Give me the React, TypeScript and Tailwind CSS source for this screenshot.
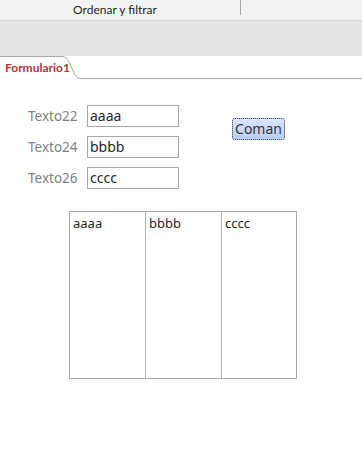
import React from 'react';

const fields = [
  { label: 'Texto22', value: 'aaaa' },
  { label: 'Texto24', value: 'bbbb' },
  { label: 'Texto26', value: 'cccc' },
];

export default function App() {
  return (
    <div className="w-[362px] h-[473px] bg-white overflow-hidden font-['Noto_Sans',sans-serif]">
      {/* ribbon */}
      <div className="flex h-[21px] bg-[#f3f3f3] border-b border-[#d4d4d4]">
        <div className="w-[230px] flex justify-center items-center text-[12px] text-[#262626] pb-[1px] font-['Lato',sans-serif]">Ordenar y filtrar</div>
        <div className="ml-[10px] w-px h-[15px] bg-[#a8a8a8]" />
      </div>
      <div className="h-[35px] bg-[#e6e6e6]" />

      {/* tab strip */}
      <div className="flex h-[23px] bg-white">
        <div className="relative w-[80px] shrink-0">
          <svg className="absolute inset-0" width="80" height="23" viewBox="0 0 80 23">
            <path d="M0 0.5 H62 Q66 0.5 68 4 L75 19 Q77 22.5 80 22.5" fill="none" stroke="#a6a6a6" strokeWidth="1" />
          </svg>
          <div className="relative pl-[5px] pt-[5px] text-[12px] font-bold text-[#b2353a] leading-[14px] font-['Lato',sans-serif]">Formulario1</div>
        </div>
        <div className="flex-1 border-b border-[#a6a6a6] self-end" />
      </div>

      {/* form body */}
      <div className="flex pt-[26px]">
        <div className="flex flex-col gap-[9px] pl-[28px]">
          {fields.map((f) => (
            <div key={f.label} className="flex items-center">
              <div className="w-[59px] text-[13.5px] text-[#7f7f7f]">{f.label}</div>
              <div className="w-[92px] h-[22px] border border-[#a6a6a6] pl-[2px] text-[14px] leading-[20px] text-[#262626]">{f.value}</div>
            </div>
          ))}
        </div>
        <div className="pl-[53px] pt-[13px]">
          <div className="w-[53px] h-[22px] rounded-[3px] border border-dotted border-[#2f3a55] bg-gradient-to-b from-[#dbe6fb] to-[#b8cdf5] text-[14px] leading-[19px] text-[#333] text-center">
            Coman
          </div>
        </div>
      </div>

      {/* datasheet */}
      <div className="pl-[69px] pt-[22px]">
        <div className="flex w-[228px] h-[168px] border border-[#a6a6a6] text-[13px] text-[#262626]">
          <div className="w-[76px] border-r border-[#b4b4b4] pl-[3px] pt-[2px]">aaaa</div>
          <div className="w-[76px] border-r border-[#b4b4b4] pl-[3px] pt-[2px]">bbbb</div>
          <div className="flex-1 pl-[3px] pt-[2px]">cccc</div>
        </div>
      </div>
    </div>
  );
}
